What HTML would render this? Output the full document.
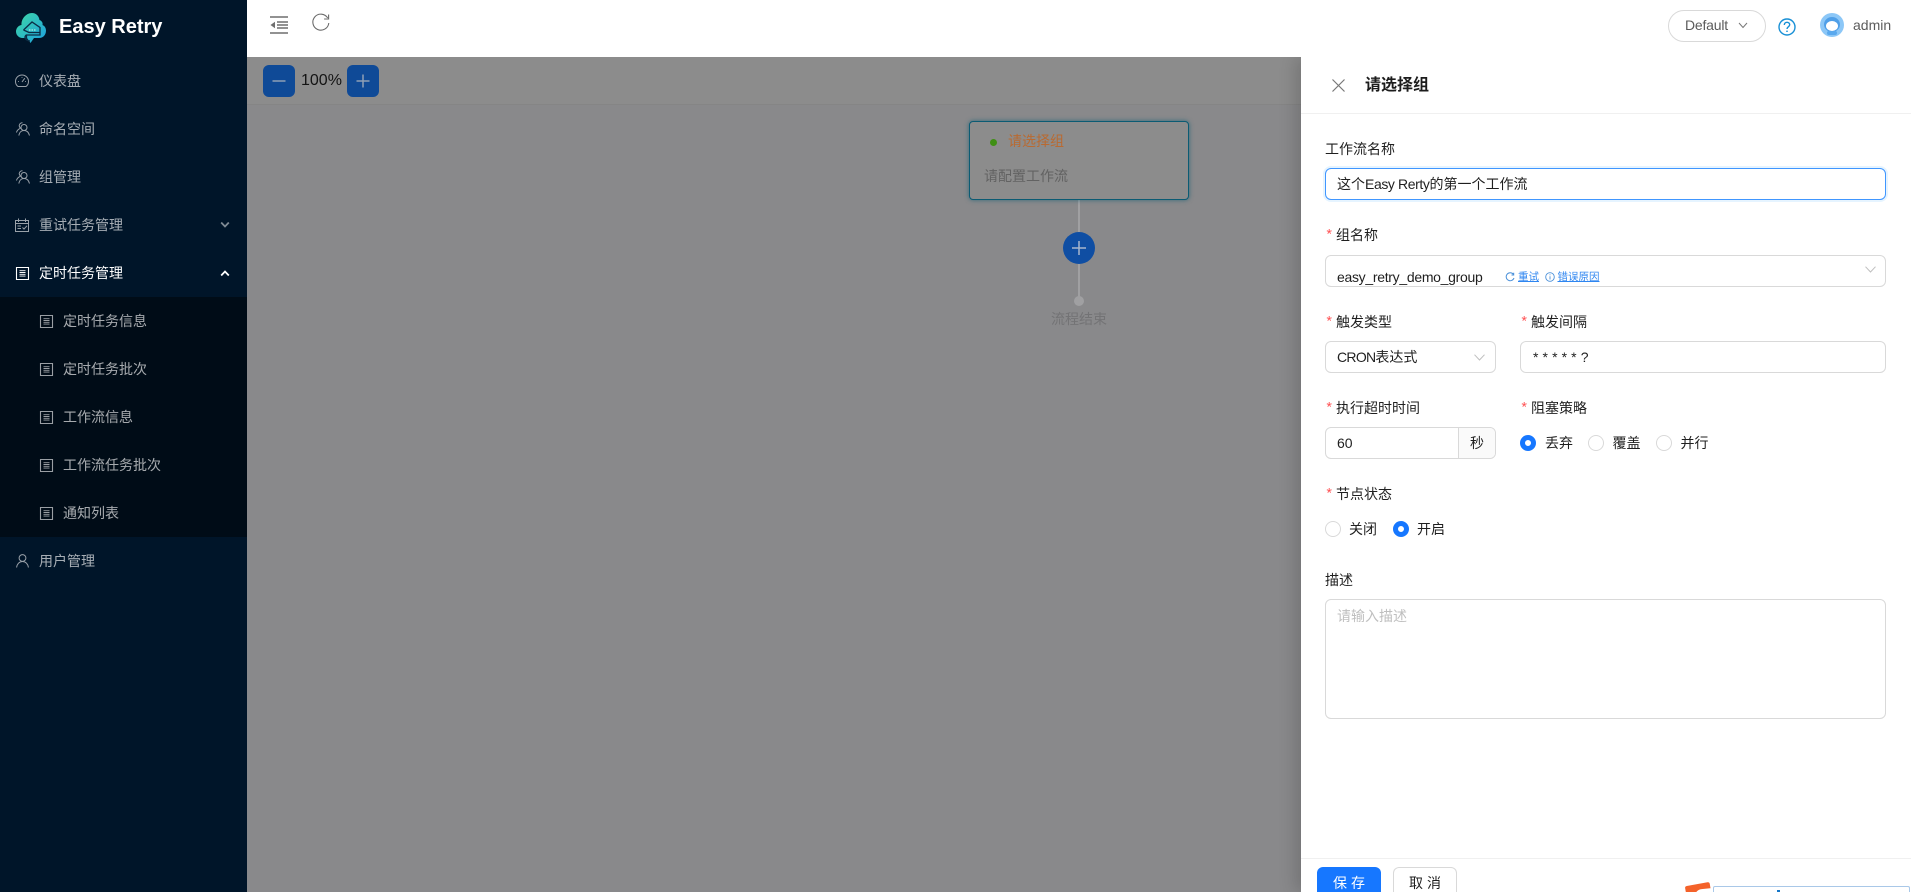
<!DOCTYPE html>
<html lang="zh">
<head>
<meta charset="utf-8">
<title>Easy Retry</title>
<style>
*{box-sizing:border-box}
html,body{margin:0;padding:0;width:1911px;height:892px;overflow:hidden;background:#fff;
font-family:"Liberation Sans","Noto Sans CJK SC",sans-serif;font-size:14px;color:rgba(0,0,0,.88)}
#root{position:absolute;left:0;top:0;width:1911px;height:892px;overflow:hidden;contain:paint}
.a{position:absolute}
.t{position:absolute;white-space:nowrap;line-height:20px}
#side{left:0;top:0;width:247px;height:892px;background:#001529;z-index:3}
#sub{left:0;top:297px;width:247px;height:240px;background:#000c17}
.m{color:rgba(255,255,255,.65)}
svg{position:absolute;display:block;overflow:visible}
.lb::before{content:"*";position:absolute;left:-11px;top:1px;color:#ff4d4f;font-family:"Liberation Mono",monospace;font-size:14px}
.box{position:absolute;border:1px solid #d9d9d9;border-radius:6px;background:#fff}
.r{position:absolute;width:16px;height:16px;border-radius:50%;border:1px solid #d9d9d9;background:#fff}
.r.on{border:5px solid #1677ff}
</style>
</head>
<body>
<div id="root">
<!-- canvas (dimmed) -->
<div class="a" style="left:247px;top:57px;width:1054px;height:835px;background:#89898b"></div>
<div class="a" style="left:247px;top:57px;width:1054px;height:48px;background:#8c8c8c;border-bottom:1px solid #858585"></div>
<div class="a" style="left:263px;top:65px;width:32px;height:32px;border-radius:6px;background:#0f4a97"></div>
<svg style="left:263px;top:65px" width="32" height="32"><path d="M9.500 16H22.500" stroke="#8f9fb5" stroke-width="1.500"/></svg>
<div class="t" style="left:301px;top:71px;font-size:16px;color:#141414">100%</div>
<div class="a" style="left:347px;top:65px;width:32px;height:32px;border-radius:6px;background:#0f4a97"></div>
<svg style="left:347px;top:65px" width="32" height="32"><path d="M9.500 16H22.500M16 9.500V22.500" stroke="#8f9fb5" stroke-width="1.500"/></svg>

<div class="a" style="left:1078px;top:200px;width:2px;height:100px;background:#a0a0a2"></div>
<div class="a" style="left:969px;top:121px;width:220px;height:79px;background:#8c8c8c;border:1px solid #0b5b73;border-radius:4px;box-shadow:0 0 5px rgba(11,91,115,.7)"></div>
<div class="a" style="left:990px;top:139px;width:7px;height:7px;border-radius:50%;background:#3f8f14"></div>
<div class="t" style="left:1008px;top:131px;color:#b96a31">请选择组</div>
<div class="t" style="left:984px;top:166px;color:#626262">请配置工作流</div>
<div class="a" style="left:1063px;top:232px;width:32px;height:32px;border-radius:50%;background:#0f4ea3"></div>
<svg style="left:1063px;top:232px" width="32" height="32"><path d="M9 16H23M16 9V23" stroke="#a8b6cc" stroke-width="1.500"/></svg>
<div class="a" style="left:1074px;top:296px;width:10px;height:10px;border-radius:50%;background:#a0a0a2"></div>
<div class="t" style="left:1051px;top:309px;color:#737375">流程结束</div>

<!-- sidebar -->
<div id="side" class="a">
  <div id="sub" class="a"></div>
  <svg style="left:15px;top:12px" width="32" height="32" viewBox="0 0 32 32">
    <defs><linearGradient id="g" x1="0" y1="0" x2="1" y2="1"><stop offset="0" stop-color="#3fd8a4"/><stop offset="1" stop-color="#1c9fe0"/></linearGradient></defs>
    <g fill="url(#g)">
      <path d="M7 26A6.500 6.500 0 0 1 1 19.500A6.500 6.500 0 0 1 6.500 13C6 7 11 1 17 1C21 1 24 4 24.500 8C27 9 28 11 27.500 13C30 14 31 16.500 31 18.500C31 23 28 26 24 26L19 26L15.500 31L12 26Z"/>
    </g>
    <path d="M8.500 18L17 10L25 15.500V23H11.500V27M8.500 18L14 20.500H25M11 23C8.500 26 11 28.500 15 29" fill="none" stroke="#0b2c45" stroke-width="1.300"/>
    <path d="M14 18H21" stroke="#b6e9e0" stroke-width="1.200" stroke-dasharray="1.500 1"/>
  </svg>
  <div class="t" style="left:59px;top:16px;font-size:20px;line-height:23px;font-weight:700;color:#fff">Easy Retry</div>

  <svg style="left:15px;top:74px" width="14" height="14" viewBox="0 0 14 14" fill="none" stroke="#99a1a9" stroke-width="1"><path d="M3 12.500C1.300 11.300.5 9.500.5 7.500A6.500 6.500 0 0 1 13.500 7.500C13.500 9.500 12.700 11.300 11 12.500ZM7 8L9.800 4.200M3 7.500H3.800M10.200 7.500H11M7 3V3.800"/></svg>
  <div class="t m" style="left:39px;top:71px">仪表盘</div>

  <svg style="left:16px;top:122px" width="14" height="14" viewBox="0 0 14 14" fill="none" stroke="#99a1a9" stroke-width="1"><circle cx="8" cy="5.500" r="3"/><path d="M2.800 13.500C3.300 10.500 5.300 8.500 8 8.500C10.700 8.500 12.700 10.500 13.500 13.500M6.500 .8A3 3 0 0 0 3.200 3.500C3.200 4.800 3.800 5.500 4.500 6.200C2.500 7 1 8.500.5 10.500"/></svg>
  <div class="t m" style="left:39px;top:119px">命名空间</div>

  <svg style="left:16px;top:170px" width="14" height="14" viewBox="0 0 14 14" fill="none" stroke="#99a1a9" stroke-width="1"><circle cx="8" cy="5.500" r="3"/><path d="M2.800 13.500C3.300 10.500 5.300 8.500 8 8.500C10.700 8.500 12.700 10.500 13.500 13.500M6.500 .8A3 3 0 0 0 3.200 3.500C3.200 4.800 3.800 5.500 4.500 6.200C2.500 7 1 8.500.5 10.500"/></svg>
  <div class="t m" style="left:39px;top:167px">组管理</div>

  <svg style="left:15px;top:218px" width="14" height="14" viewBox="0 0 14 14" fill="none" stroke="#99a1a9" stroke-width="1"><path d="M.5 2.500H13.500V13.500H.5ZM3.500 .5V4M10.500 .5V4M.5 5.500H13.500M2.500 8H6M2.500 10.500H6M7.500 9.500L9 11L12 7.800"/></svg>
  <div class="t m" style="left:39px;top:215px">重试任务管理</div>
  <svg style="left:220px;top:221px" width="10" height="8" viewBox="0 0 10 8" fill="none" stroke="#7f8a94" stroke-width="1.800"><path d="M1.200 1.500L5 5.500L8.800 1.500"/></svg>

  <svg style="left:16px;top:267px" width="13" height="13" viewBox="0 0 13 13" fill="none" stroke="#fff" stroke-width="1.100"><path d="M.5.500H12.500V12.500H.5Z"/><path d="M3.500 3.700H9.500M3.500 5.500H9.500M3.500 7.300H9.500M3.500 9.100H9.500" stroke-width=".9"/></svg>
  <div class="t" style="left:39px;top:263px;color:#fff">定时任务管理</div>
  <svg style="left:220px;top:270px" width="10" height="8" viewBox="0 0 10 8" fill="none" stroke="#fff" stroke-width="1.800"><path d="M1.200 5.500L5 1.500L8.800 5.500"/></svg>

  <svg style="left:40px;top:315px" width="13" height="13" viewBox="0 0 13 13" fill="none" stroke="#9a9fa4" stroke-width="1.100"><path d="M.5.500H12.500V12.500H.5Z"/><path d="M3.500 3.700H9.500M3.500 5.500H9.500M3.500 7.300H9.500M3.500 9.100H9.500" stroke-width=".9"/></svg>
  <div class="t m" style="left:63px;top:311px">定时任务信息</div>
  <svg style="left:40px;top:363px" width="13" height="13" viewBox="0 0 13 13" fill="none" stroke="#9a9fa4" stroke-width="1.100"><path d="M.5.500H12.500V12.500H.5Z"/><path d="M3.500 3.700H9.500M3.500 5.500H9.500M3.500 7.300H9.500M3.500 9.100H9.500" stroke-width=".9"/></svg>
  <div class="t m" style="left:63px;top:359px">定时任务批次</div>
  <svg style="left:40px;top:411px" width="13" height="13" viewBox="0 0 13 13" fill="none" stroke="#9a9fa4" stroke-width="1.100"><path d="M.5.500H12.500V12.500H.5Z"/><path d="M3.500 3.700H9.500M3.500 5.500H9.500M3.500 7.300H9.500M3.500 9.100H9.500" stroke-width=".9"/></svg>
  <div class="t m" style="left:63px;top:407px">工作流信息</div>
  <svg style="left:40px;top:459px" width="13" height="13" viewBox="0 0 13 13" fill="none" stroke="#9a9fa4" stroke-width="1.100"><path d="M.5.500H12.500V12.500H.5Z"/><path d="M3.500 3.700H9.500M3.500 5.500H9.500M3.500 7.300H9.500M3.500 9.100H9.500" stroke-width=".9"/></svg>
  <div class="t m" style="left:63px;top:455px">工作流任务批次</div>
  <svg style="left:40px;top:507px" width="13" height="13" viewBox="0 0 13 13" fill="none" stroke="#9a9fa4" stroke-width="1.100"><path d="M.5.500H12.500V12.500H.5Z"/><path d="M3.500 3.700H9.500M3.500 5.500H9.500M3.500 7.300H9.500M3.500 9.100H9.500" stroke-width=".9"/></svg>
  <div class="t m" style="left:63px;top:503px">通知列表</div>

  <svg style="left:16px;top:554px" width="13" height="14" viewBox="0 0 13 14" fill="none" stroke="#99a1a9" stroke-width="1"><circle cx="6.500" cy="4" r="3.400"/><path d="M.6 13.500C1 10 3.400 7.500 6.500 7.500C9.600 7.500 12 10 12.400 13.500"/></svg>
  <div class="t m" style="left:39px;top:551px">用户管理</div>
</div>

<!-- header -->
<div class="a" style="left:247px;top:0;width:1664px;height:57px;background:#fff;z-index:2"></div>
<div style="position:absolute;left:0;top:0;z-index:3">
  <svg style="left:270px;top:16px" width="18" height="18" viewBox="0 0 18 18"><path d="M0 1H18M7 6H18M7 9H18M7 12H18M0 17H18" stroke="#6f6f6f" stroke-width="1.600" fill="none"/><path d="M5 5.800V12.200L.5 9Z" fill="#6f6f6f"/></svg>
  <svg style="left:312px;top:13px" width="18" height="18" viewBox="0 0 18 18" fill="none"><path d="M15.700 5A8 8 0 1 0 16.800 10" stroke="#6b6b6b" stroke-width="1.100"/><path d="M16.600 1.500V6H12.100" stroke="#6b6b6b" stroke-width="1.100" fill="none"/></svg>
  <div class="a" style="left:1668px;top:10px;width:98px;height:32px;border:1px solid #d9d9d9;border-radius:16px;background:#fff"></div>
  <div class="t" style="left:1685px;top:15px;color:rgba(0,0,0,.65);letter-spacing:-.2px">Default</div>
  <svg style="left:1738px;top:22px" width="10" height="7" viewBox="0 0 10 7" fill="none" stroke="#777" stroke-width="1"><path d="M1 1L5 5.500L9 1"/></svg>
  <svg style="left:1778px;top:18px" width="18" height="18" viewBox="0 0 18 18" fill="none" stroke="#1890d6" stroke-width="1.400"><circle cx="9" cy="9" r="8"/><path d="M6.300 7C6.300 5.400 7.500 4.300 9 4.300C10.600 4.300 11.700 5.400 11.700 6.800C11.700 8.600 9 8.800 9 11"/><path d="M9 12.600V14" stroke-width="1.500"/></svg>
  <div class="a" style="left:1820px;top:13px;width:24px;height:24px;border-radius:50%;background:#8cc7f7"></div>
  <div class="a" style="left:1824px;top:17px;width:16px;height:15px;border-radius:50%;background:#4f9fe8"></div>
  <div class="a" style="left:1826px;top:21px;width:12px;height:10px;border-radius:50%;background:#fff"></div>
  <div class="a" style="left:1827px;top:31px;width:10px;height:4px;border-radius:2px;background:#5aa9ee"></div>
  <div class="t" style="left:1853px;top:15px;color:rgba(0,0,0,.65)">admin</div>
</div>

<!-- drawer -->
<div class="a" style="left:1301px;top:57px;width:610px;height:835px;background:#fff;box-shadow:-6px 0 16px rgba(0,0,0,.16);z-index:1"></div>
<div style="position:absolute;left:0;top:0;z-index:2">
  <div class="a" style="left:1301px;top:113px;width:610px;height:1px;background:#f0f0f0"></div>
  <svg style="left:1332px;top:79px" width="13" height="13" viewBox="0 0 13 13" stroke="#777" stroke-width="1.200"><path d="M.5.500L12.500 12.500M12.500.500L.5 12.500"/></svg>
  <div class="t" style="left:1365px;top:75px;font-size:16px;line-height:22px;font-weight:700;color:#1c1c1c">请选择组</div>

  <div class="t" style="left:1325px;top:139px">工作流名称</div>
  <div class="box" style="left:1325px;top:168px;width:561px;height:32px;border-color:#4096ff;box-shadow:0 0 0 2px rgba(5,145,255,.1)"></div>
  <div class="t" style="left:1337px;top:174px">这个<span style="letter-spacing:-.4px">Easy Rerty</span>的第一个工作流</div>

  <div class="t lb" style="left:1336px;top:225px">组名称</div>
  <div class="box" style="left:1325px;top:255px;width:561px;height:32px"></div>
  <div class="t" style="left:1337px;top:267px;letter-spacing:-.3px">easy_retry_demo_group</div>
  <svg style="left:1505px;top:272px" width="10" height="10" viewBox="0 0 10 10" fill="none" stroke="#4a90d9" stroke-width="1"><path d="M8.300 2.200A4 4 0 1 0 9 6M8.700.8V3H6.500"/></svg>
  <div class="t" style="left:1518px;top:267px;font-size:10.500px;color:#2f86f0;text-decoration:underline">重试</div>
  <svg style="left:1545px;top:272px" width="10" height="10" viewBox="0 0 10 10" fill="none" stroke="#4a90d9" stroke-width=".9"><circle cx="5" cy="5" r="4.300"/><path d="M5 4.300V7.500M5 2.400V3.300"/></svg>
  <div class="t" style="left:1557.500px;top:267px;font-size:10.500px;color:#2f86f0;text-decoration:underline">错误原因</div>
  <svg style="left:1865px;top:266px" width="11" height="7" viewBox="0 0 11 7" fill="none" stroke="#bfbfbf" stroke-width="1"><path d="M.5.700L5.500 6L10.500.7"/></svg>

  <div class="t lb" style="left:1336px;top:312px">触发类型</div>
  <div class="box" style="left:1325px;top:341px;width:171px;height:32px"></div>
  <div class="t" style="left:1337px;top:347px"><span style="letter-spacing:-.7px">CRON</span>表达式</div>
  <svg style="left:1474px;top:354px" width="11" height="7" viewBox="0 0 11 7" fill="none" stroke="#bfbfbf" stroke-width="1"><path d="M.5.700L5.500 6L10.500.7"/></svg>
  <div class="t lb" style="left:1531px;top:312px">触发间隔</div>
  <div class="box" style="left:1520px;top:341px;width:366px;height:32px"></div>
  <div class="t" style="left:1533px;top:347px;letter-spacing:.1px">* * * * * ?</div>

  <div class="t lb" style="left:1336px;top:398px">执行超时时间</div>
  <div class="box" style="left:1325px;top:427px;width:171px;height:32px;overflow:hidden"><div class="a" style="left:132px;top:0;width:38px;height:30px;background:#fafafa;border-left:1px solid #d9d9d9"></div></div>
  <div class="t" style="left:1337px;top:433px">60</div>
  <div class="t" style="left:1470px;top:433px">秒</div>
  <div class="t lb" style="left:1531px;top:398px">阻塞策略</div>
  <div class="r on" style="left:1520px;top:435px"></div><div class="t" style="left:1545px;top:433px">丢弃</div>
  <div class="r" style="left:1588px;top:435px"></div><div class="t" style="left:1612.500px;top:433px">覆盖</div>
  <div class="r" style="left:1656px;top:435px"></div><div class="t" style="left:1680.500px;top:433px">并行</div>

  <div class="t lb" style="left:1336px;top:484px">节点状态</div>
  <div class="r" style="left:1325px;top:521px"></div><div class="t" style="left:1349px;top:519px">关闭</div>
  <div class="r on" style="left:1393px;top:521px"></div><div class="t" style="left:1417px;top:519px">开启</div>

  <div class="t" style="left:1325px;top:570px">描述</div>
  <div class="box" style="left:1325px;top:599px;width:561px;height:120px"></div>
  <div class="t" style="left:1337px;top:606px;color:#bfbfbf">请输入描述</div>

  <div class="a" style="left:1301px;top:858px;width:610px;height:1px;background:#f0f0f0"></div>
  <div class="a" style="left:1317px;top:867px;width:64px;height:25px;background:#1677ff;border-radius:6px 6px 0 0"></div>
  <div class="t" style="left:1333px;top:873px;color:#fff;letter-spacing:4px">保存</div>
  <div class="a" style="left:1393px;top:867px;width:64px;height:25px;background:#fff;border:1px solid #d9d9d9;border-bottom:0;border-radius:6px 6px 0 0"></div>
  <div class="t" style="left:1409px;top:873px;letter-spacing:4px">取消</div>

  <div class="a" style="left:1713px;top:886px;width:197px;height:6px;background:#fff;border:1px solid #a9c8e8;border-bottom:0;border-radius:2px 2px 0 0"></div>
  <div class="a" style="left:1777px;top:890px;width:3px;height:2px;background:#1677c8"></div>
  <div class="a" style="left:1685px;top:882px;width:28px;height:10px;overflow:hidden">
    <div class="a" style="left:1px;top:2px;width:25px;height:16px;background:#f4622a;transform:rotate(-10deg);border-radius:2px"></div>
    <div class="a" style="left:9px;top:7px;width:19px;height:8px;background:#fff;border-radius:8px 0 0 0;transform:rotate(-6deg)"></div>
  </div>
</div>
</div>
</body>
</html>
